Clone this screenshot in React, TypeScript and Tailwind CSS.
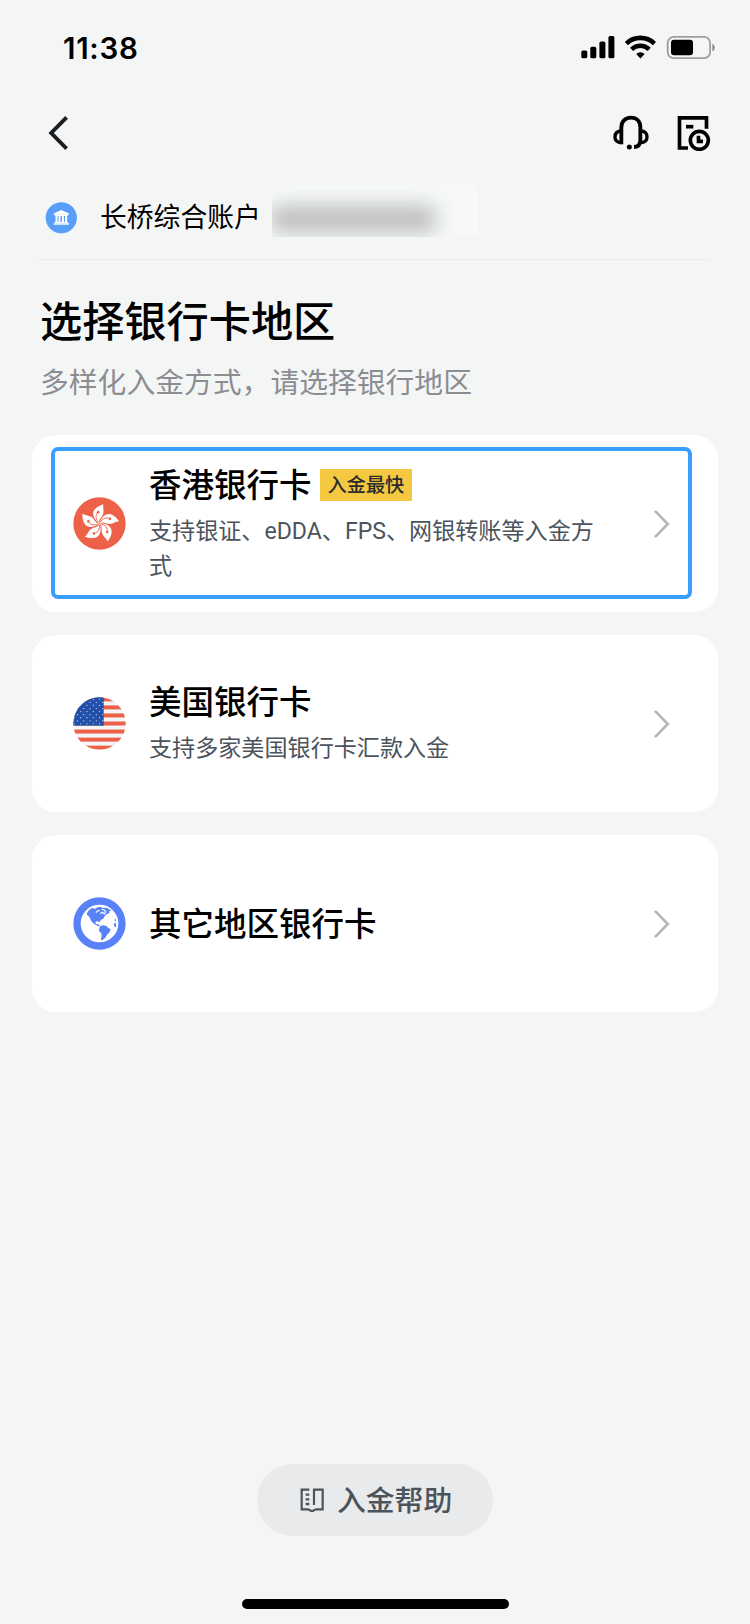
import React from "react";

function StatusIcons() {
  return (
    <svg className="h-[30px] w-[140px]" viewBox="0 0 140 30" fill="#000">
      <rect x="1.3" y="17.5" width="6" height="7.8" rx="1.6" />
      <rect x="10.3" y="13.7" width="6" height="11.6" rx="1.6" />
      <rect x="19.4" y="8.6" width="6" height="16.7" rx="1.6" />
      <rect x="28.4" y="3" width="6" height="22.3" rx="1.6" />
      <g fill="none" stroke="#000" strokeWidth="4.6">
        <path d="M46.4 10.6 A20 20 0 0 1 74.4 10.6" />
        <path d="M51.6 16.4 A12.6 12.6 0 0 1 69.2 16.4" />
      </g>
      <path d="M56.2 21 A6.2 6.2 0 0 1 64.6 21 L60.4 25.6 Z" />
      <rect x="87.7" y="3.8" width="42.4" height="21.4" rx="6" fill="none" stroke="#9d9e9e" strokeWidth="1.8" />
      <rect x="91" y="6.8" width="22" height="15.4" rx="3" />
      <path d="M132.3 10.7 C135.6 11.8 135.6 17 132.3 18.2 Z" fill="#8e8f8f" />
    </svg>
  );
}

function BackIcon() {
  return (
    <svg className="h-9 w-[22px]" viewBox="0 0 22 36" fill="none" stroke="#1b1d22" strokeWidth="3.9">
      <path d="M18.6 2.4 L3.2 18 L18.6 33.6" />
    </svg>
  );
}

function HeadsetIcon() {
  return (
    <svg className="h-9 w-9" viewBox="0 0 108 108" fill="none" stroke="#000" strokeWidth="11.5">
      <path d="M25 88 V38 C25 18 38 8 54 8 C70 8 82 18 82 38 V76 C82 90 76 96 63 96" />
      <path d="M26 48 C12 48 6 56 6 66 C6 76 12 83 26 83" strokeWidth="10" />
      <path d="M83 48 C96 48 102 56 102 66 C102 76 96 83 83 83" strokeWidth="10" />
      <circle cx="49" cy="96" r="7.5" fill="#000" stroke="none" />
    </svg>
  );
}

function RecordIcon() {
  return (
    <svg className="h-9 w-[34px]" viewBox="0 0 102 108" fill="none" stroke="#000" strokeWidth="11">
      <path d="M33 99 H7.5 V8.5 H88.5 V41" />
      <path d="M27 35 H49" strokeWidth="11" />
      <circle cx="67" cy="76" r="27" />
      <path d="M64.5 62 V79 H78" />
    </svg>
  );
}

function BankIcon() {
  return (
    <svg className="h-8 w-8" viewBox="0 0 32 32">
      <circle cx="16.3" cy="15.8" r="15.6" fill="#579ff8" />
      <g fill="#fff">
        <path d="M16.3 8 L23.9 11.6 V12.8 H8.7 V11.6 Z" />
        <rect x="9.9" y="12.6" width="12.8" height="1.4" />
        <rect x="10.5" y="13.6" width="2" height="7.2" />
        <rect x="13.5" y="13.6" width="2" height="7.2" />
        <rect x="16.9" y="13.6" width="2" height="7.2" />
        <rect x="20.1" y="13.6" width="2" height="7.2" />
        <rect x="9.7" y="19.9" width="13.2" height="1" />
        <rect x="8.6" y="21.2" width="15.4" height="1.5" />
      </g>
    </svg>
  );
}

function HongKongFlag() {
  return (
    <svg className="h-[53px] w-[53px]" viewBox="-79.5 -79.5 159 159">
      <circle r="78.5" fill="#ee6149" />
      {[0, 72, 144, 216, 288].map((angle) => (
        <g key={angle} transform={`rotate(${angle})`}>
          <path
            d="M-1 0 C-15 -10 -22 -24 -18 -36 C-13 -48 0 -54 12 -58 C9 -48 14 -41 11 -29 C8 -18 -3 -14 -1 0 Z"
            fill="#fff"
          />
          <path d="M-3 -4 C-11 -13 -12 -21 -7 -31" fill="none" stroke="#ee6149" strokeWidth="2.6" />
          <circle cx="-4" cy="-34" r="4" fill="#ee6149" />
        </g>
      ))}
    </svg>
  );
}

function UsFlag() {
  const stars: [number, number][] = [];
  for (let row = 0; row < 9; row++) {
    for (let col = 0; col < 5; col++) {
      stars.push([col * 19 + (row % 2 ? 13 : 4), row * 9.2 + 7]);
    }
  }
  return (
    <svg className="h-[53px] w-[53px]" viewBox="0 0 159 159">
      <defs>
        <clipPath id="us-round">
          <circle cx="79.5" cy="79.5" r="78.5" />
        </clipPath>
        <clipPath id="us-canton">
          <rect width="92" height="86" />
        </clipPath>
      </defs>
      <g clipPath="url(#us-round)">
        <rect width="159" height="159" fill="#f3f5f6" />
        {[0, 2, 4, 6, 8, 10, 12].map((stripe) => (
          <rect key={stripe} y={1 + stripe * 12.08} width="159" height="12.08" fill="#ee6149" />
        ))}
        <rect width="92" height="86" fill="#2350a9" />
        <g clipPath="url(#us-canton)" fill="#c9d5ee">
          {stars.map(([x, y]) => (
            <circle key={`${x}-${y}`} cx={x} cy={y} r="1.9" />
          ))}
        </g>
      </g>
    </svg>
  );
}

function GlobeIcon() {
  return (
    <svg className="h-[53px] w-[53px]" viewBox="0 0 159 159">
      <circle cx="79.5" cy="79.5" r="78.5" fill="#5a82f8" />
      <circle cx="79.5" cy="79.5" r="56.5" fill="#fff" />
      <g fill="#5a82f8">
        <path d="M41 52 C43 43 50 36 58 33 L66 35 L74 31 L84 30 L90 33 L100 32 C107 35 112 38 115 42 L108 43 L110 48 L102 51 L95 57 L91 65 L83 69 L80 76 L73 72 L67 76 L69 82 L75 81 L82 87 L78 88 L68 84 C61 80 55 74 52 67 C51 59 46 58 41 52 Z" />
        <path d="M82 87 L91 85 L102 88 L105 93 L113 96 L109 107 L103 112 L97 122 L88 130 L84 129 L86 111 L78 101 L79 93 Z" />
        <path d="M128 64 L124 70 L129 74 Z M122 80 L128 77 L130 89 L125 90 Z" />
      </g>
      <g fill="none" stroke="#fff" strokeWidth="3.5">
        <path d="M69 47 L73 42 L80 41" />
        <path d="M86 37 L94 39 L98 45 L94 51 L88 46 L82 50" />
      </g>
    </svg>
  );
}

function BookIcon() {
  return (
    <svg className="h-6 w-6" viewBox="0 0 72 72" fill="none" stroke="#4b535c" strokeWidth="6.5">
      <path d="M28 5 H5 V64 H24 L36 70 L48 64 H68 V5 H42 V51" />
      <path d="M17 20 H28 M17 34 H28 M17 48 H28" strokeWidth="7" />
    </svg>
  );
}

function Chevron() {
  return (
    <svg className="h-7 w-4" viewBox="0 0 16 28" fill="none" stroke="#b3b5b9" strokeWidth="2.6">
      <path d="M0.9 0.9 L13.8 14 L0.9 27.1" />
    </svg>
  );
}

interface RegionCardProps {
  icon: React.ReactNode;
  title: string;
  badge?: string;
  description?: string;
  selected?: boolean;
}

function RegionCard({ icon, title, badge, description, selected }: RegionCardProps) {
  return (
    <button className="flex h-[177px] w-[686px] items-start rounded-[24px] bg-white pt-3 pl-[19px] text-left">
      <span
        className={
          "flex h-[152px] w-[641px] items-center rounded-[7px] border-4 pr-[18px] pl-[18px] " +
          (selected ? "border-[#389fff]" : "border-transparent")
        }
      >
        {icon}
        <span className={"ml-[23px] flex w-[460px] flex-col " + (description ? "pt-[2px]" : "pt-1")}>
          <span className="flex items-center">
            <span className="text-[32.5px] leading-[44px] font-medium text-black">{title}</span>
            {badge && (
              <span className="mb-[3px] ml-2 flex h-8 items-center bg-[#f5c842] px-2 text-[19.2px] leading-8 font-medium text-[#2a2c2a]">
                {badge}
              </span>
            )}
          </span>
          {description && (
            <span className="mt-[7px] font-['Roboto','Noto_Sans_CJK_SC',sans-serif] text-[23.1px] leading-[34.5px] text-[#4b535c]">
              {description}
            </span>
          )}
        </span>
        <span className="ml-auto pt-0.5">
          <Chevron />
        </span>
      </span>
    </button>
  );
}

export default function App() {
  return (
    <main className="flex h-[1624px] w-[750px] flex-col bg-[#f4f6f6] font-['Inter','Noto_Sans_CJK_SC',sans-serif]">
      <header className="flex h-[88px] items-center justify-between pt-2 pr-[30px] pl-[63px]">
        <span className="text-[29.5px] leading-9 font-semibold tracking-[0.7px] text-black">11:38</span>
        <StatusIcons />
      </header>

      <nav className="flex h-[90px] items-center pr-[39px] pl-12">
        <BackIcon />
        <span className="ml-auto flex gap-[28px]">
          <HeadsetIcon />
          <RecordIcon />
        </span>
      </nav>

      <section className="mr-[39px] ml-[38px] flex h-[82px] items-start border-b border-[#eaecec] pt-[7px] pl-[7px]">
        <span className="mt-[17px]">
          <BankIcon />
        </span>
        <span className="mt-[14px] ml-[23px] text-[26.8px] leading-9 text-black">长桥综合账户</span>
        <span className="ml-[11px] flex h-[52px] w-[206px] overflow-hidden bg-[#f7f9f9]">
          <span className="mt-[21px] -ml-0.5 h-[26px] w-[166px] rounded-lg bg-[#bbbcbc] blur-[10px]" />
        </span>
      </section>

      <section className="flex flex-col pt-[32px] pl-10">
        <h1 className="text-[42.2px] leading-[60px] font-medium text-black">选择银行卡地区</h1>
        <p className="mt-[11px] text-[28.8px] leading-10 text-[#8b8d92]">多样化入金方式，请选择银行地区</p>
      </section>

      <section className="mt-[32px] flex flex-col gap-[23px] pl-8">
        <RegionCard
          icon={<HongKongFlag />}
          title="香港银行卡"
          badge="入金最快"
          description="支持银证、eDDA、FPS、网银转账等入金方式"
          selected
        />
        <RegionCard icon={<UsFlag />} title="美国银行卡" description="支持多家美国银行卡汇款入金" />
        <RegionCard icon={<GlobeIcon />} title="其它地区银行卡" />
      </section>

      <footer className="mt-auto flex flex-col items-center pb-[15px]">
        <button className="flex h-[72px] w-[236px] items-center rounded-full bg-[#e9eaeb] pl-[43px] text-[28.8px] leading-10 font-medium text-[#4b535c]">
          <BookIcon />
          <span className="ml-[13px] pt-px">入金帮助</span>
        </button>
        <span className="mt-[63px] h-[10px] w-[267px] rounded-full bg-black" />
      </footer>
    </main>
  );
}
